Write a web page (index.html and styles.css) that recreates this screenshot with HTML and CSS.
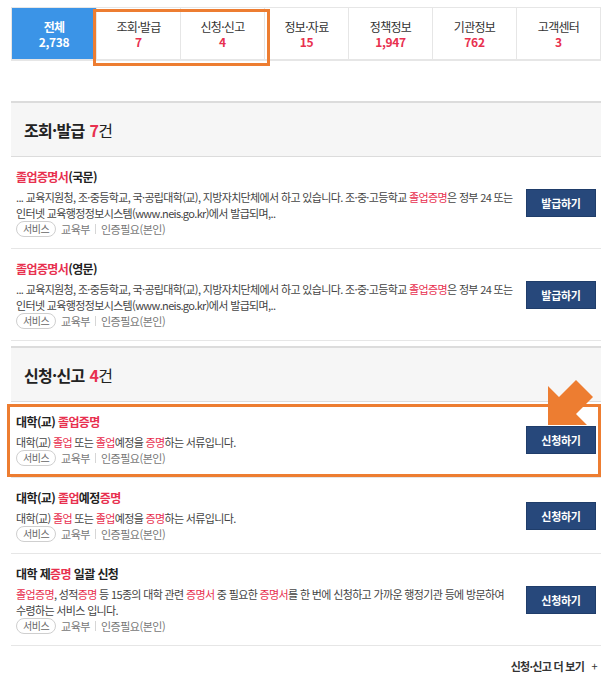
FILE: index.html
```html
<!DOCTYPE html>
<html lang="ko">
<head>
<meta charset="utf-8">
<title>검색결과</title>
<link rel="stylesheet" href="styles.css">
</head>
<body>
<div class="page">
  <div class="tabs-wrap">
    <ul class="tabs">
      <li class="tab active"><span class="tab-label">전체</span><span class="tab-count">2,738</span></li>
      <li class="tab"><span class="tab-label">조회·발급</span><span class="tab-count">7</span></li>
      <li class="tab"><span class="tab-label">신청·신고</span><span class="tab-count">4</span></li>
      <li class="tab"><span class="tab-label">정보·자료</span><span class="tab-count">15</span></li>
      <li class="tab"><span class="tab-label">정책정보</span><span class="tab-count">1,947</span></li>
      <li class="tab"><span class="tab-label">기관정보</span><span class="tab-count">762</span></li>
      <li class="tab"><span class="tab-label">고객센터</span><span class="tab-count">3</span></li>
    </ul>
    <div class="mark mark-tabs"></div>
  </div>

  <section class="group">
    <h2 class="group-head">조회·발급 <em>7</em><span class="unit">건</span></h2>
    <ul class="items">
      <li class="item">
        <div class="item-body">
          <p class="item-title"><span class="hl">졸업증명서</span>(국문)</p>
          <p class="item-desc">... 교육지원청, 조·중등학교, 국·공립대학(교), 지방자치단체에서 하고 있습니다. 조·중·고등학교 <span class="hl">졸업증명</span>은 정부 24 또는 인터넷 교육행정정보시스템(www.neis.go.kr)에서 발급되며,..</p>
          <div class="item-meta"><span class="pill">서비스</span><span>교육부</span><span class="sep"></span><span>인증필요(본인)</span></div>
        </div>
        <a class="btn" href="#">발급하기</a>
      </li>
      <li class="item">
        <div class="item-body">
          <p class="item-title"><span class="hl">졸업증명서</span>(영문)</p>
          <p class="item-desc">... 교육지원청, 조·중등학교, 국·공립대학(교), 지방자치단체에서 하고 있습니다. 조·중·고등학교 <span class="hl">졸업증명</span>은 정부 24 또는 인터넷 교육행정정보시스템(www.neis.go.kr)에서 발급되며,..</p>
          <div class="item-meta"><span class="pill">서비스</span><span>교육부</span><span class="sep"></span><span>인증필요(본인)</span></div>
        </div>
        <a class="btn" href="#">발급하기</a>
      </li>
    </ul>
  </section>

  <section class="group">
    <h2 class="group-head">신청·신고 <em>4</em><span class="unit">건</span></h2>
    <ul class="items">
      <li class="item">
        <div class="item-body">
          <p class="item-title">대학(교) <span class="hl">졸업증명</span></p>
          <p class="item-desc">대학(교) <span class="hl">졸업</span> 또는 <span class="hl">졸업</span>예정을 <span class="hl">증명</span>하는 서류입니다.</p>
          <div class="item-meta"><span class="pill">서비스</span><span>교육부</span><span class="sep"></span><span>인증필요(본인)</span></div>
        </div>
        <a class="btn" href="#">신청하기</a>
        <div class="mark mark-item"></div>
      </li>
      <li class="item">
        <div class="item-body">
          <p class="item-title">대학(교) <span class="hl">졸업</span>예정<span class="hl">증명</span></p>
          <p class="item-desc">대학(교) <span class="hl">졸업</span> 또는 <span class="hl">졸업</span>예정을 <span class="hl">증명</span>하는 서류입니다.</p>
          <div class="item-meta"><span class="pill">서비스</span><span>교육부</span><span class="sep"></span><span>인증필요(본인)</span></div>
        </div>
        <a class="btn" href="#">신청하기</a>
      </li>
      <li class="item">
        <div class="item-body">
          <p class="item-title">대학 제<span class="hl">증명</span> 일괄 신청</p>
          <p class="item-desc"><span class="hl">졸업증명</span>, 성적<span class="hl">증명</span> 등 15종의 대학 관련 <span class="hl">증명서</span> 중 필요한 <span class="hl">증명서</span>를 한 번에 신청하고 가까운 행정기관 등에 방문하여 수령하는 서비스 입니다.</p>
          <div class="item-meta"><span class="pill">서비스</span><span>교육부</span><span class="sep"></span><span>인증필요(본인)</span></div>
        </div>
        <a class="btn" href="#">신청하기</a>
      </li>
    </ul>
    <div class="more"><a href="#">신청·신고 더 보기 <span class="plus">+</span></a></div>
  </section>

  <svg class="arrow" width="50" height="50" viewBox="0 0 50 50" aria-hidden="true">
    <polygon points="3,47 3,8 14,19 31,2 48,19 31,36 42,47" fill="#ED7D31"/>
  </svg>
</div>
</body>
</html>
```

FILE: styles.css
```css
* { box-sizing: border-box; }
html, body { margin: 0; padding: 0; background: #fff; }
body {
  font-family: "Noto Sans CJK KR", "Noto Sans", sans-serif;
  color: #333;
  font-size: 11px;
}
ul { list-style: none; margin: 0; padding: 0; }
p { margin: 0; }
a { text-decoration: none; color: inherit; }

.page {
  position: relative;
  width: 609px;
  padding: 7px 8px 0 11px;
}

.tabs-wrap { position: relative; }
.tabs {
  display: grid;
  grid-template-columns: repeat(7, 1fr);
  height: 54px;
  border: 1px solid #e6e6e6;
  border-bottom: 2px solid #e6e6e6;
}
.tab {
  display: flex;
  flex-direction: column;
  align-items: center;
  justify-content: center;
  border-left: 1px solid #e6e6e6;
  line-height: 15px;
}
.tab:first-child { border-left: 0; }
.tab-label { font-size: 12px; color: #333; letter-spacing: -0.7px; }
.tab-count { font-size: 12px; font-weight: 700; color: #e8304f; letter-spacing: -0.3px; }
.tab.active { background: #3b94e7; }
.tab.active .tab-label,
.tab.active .tab-count { color: #fff; font-weight: 700; }

.mark { position: absolute; border: 3px solid #ED7D31; pointer-events: none; }
.mark-tabs { left: 82px; top: 2px; width: 177px; height: 57px; }

.group { margin-top: 40px; }
.group + .group { margin-top: 5px; }
.group-head {
  margin: 0;
  height: 56px;
  display: flex;
  align-items: center;
  padding-left: 13px;
  background: #f6f6f6;
  border-top: 2px solid #dcdcdc;
  border-bottom: 1px solid #dcdcdc;
  font-size: 16px;
  font-weight: 700;
  color: #222;
  letter-spacing: -0.7px;
}
.group-head em { font-style: normal; color: #e8304f; margin-left: 5px; }
.group-head .unit { font-weight: 400; }

.item {
  position: relative;
  display: flex;
  align-items: center;
  padding: 12px 5px 11px 5px;
  border-bottom: 1px solid #e6e6e6;
}
.item-body { flex: 1; padding-right: 2px; word-break: keep-all; }
.item-title {
  font-size: 12px;
  line-height: 16px;
  font-weight: 700;
  color: #222;
  letter-spacing: -0.6px;
}
.item-desc {
  margin-top: 4px;
  font-size: 11px;
  line-height: 16px;
  color: #444;
  letter-spacing: -0.65px;
}
.hl { color: #e8304f; }
.item-meta {
  display: flex;
  align-items: center;
  height: 16px;
  font-size: 11px;
  line-height: 14px;
  color: #777;
  letter-spacing: -0.5px;
}
.pill {
  display: inline-flex;
  align-items: center;
  height: 16px;
  padding: 0 6px;
  border: 1px solid #cfcfcf;
  border-radius: 9px;
  font-size: 10px;
  color: #666;
  margin-right: 5px;
}
.sep {
  display: inline-block;
  width: 1px;
  height: 10px;
  background: #d6d6d6;
  margin: 0 5px;
}
.btn {
  flex-shrink: 0;
  width: 70px;
  height: 28px;
  display: flex;
  align-items: center;
  justify-content: center;
  background: #27487b;
  border: 1px solid #1f3d6a;
  color: #fff;
  font-size: 11px;
  font-weight: 700;
  letter-spacing: -0.3px;
}
.mark-item { left: -4px; right: 0; top: 2px; bottom: 0; }

.more {
  display: flex;
  justify-content: flex-end;
  padding: 12px 4px 0 0;
  line-height: 16px;
  font-size: 11px;
  font-weight: 700;
  color: #333;
  letter-spacing: -0.7px;
}
.more .plus { font-weight: 400; margin-left: 5px; }

.arrow { position: absolute; left: 545px; top: 378px; }
```
